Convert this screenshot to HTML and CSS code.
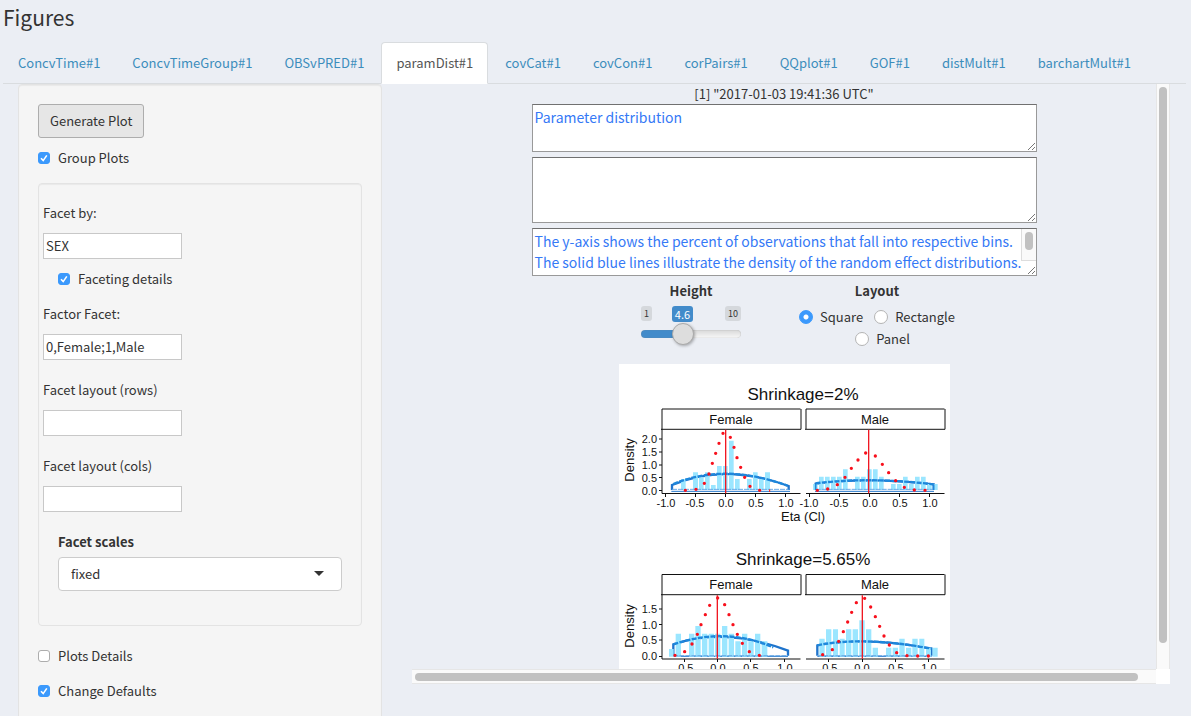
FILE: index.html
```html
<!DOCTYPE html>
<html lang="en">
<head>
<meta charset="utf-8">
<title>Figures</title>
<link rel="stylesheet" href="styles.css">
</head>
<body>
<h1 class="title">Figures</h1>
<nav class="tabs">
  <a class="tab" href="#">ConcvTime#1</a>
  <a class="tab" href="#">ConcvTimeGroup#1</a>
  <a class="tab" href="#">OBSvPRED#1</a>
  <a class="tab active" href="#">paramDist#1</a>
  <a class="tab" href="#">covCat#1</a>
  <a class="tab" href="#">covCon#1</a>
  <a class="tab" href="#">corPairs#1</a>
  <a class="tab" href="#">QQplot#1</a>
  <a class="tab" href="#">GOF#1</a>
  <a class="tab" href="#">distMult#1</a>
  <a class="tab" href="#">barchartMult#1</a>
</nav>
<main class="columns">
  <form class="sidebar">
    <button class="btn" type="button">Generate Plot</button>
    <label class="check first"><input type="checkbox" checked>Group Plots</label>
    <div class="group">
      <div class="field"><label for="facet">Facet by:</label><input id="facet" type="text" value="SEX"></div>
      <label class="check nested"><input type="checkbox" checked>Faceting details</label>
      <div class="field"><label for="factor">Factor Facet:</label><input id="factor" type="text" value="0,Female;1,Male"></div>
      <div class="field"><label for="rows">Facet layout (rows)</label><input id="rows" type="text"></div>
      <div class="field"><label for="cols">Facet layout (cols)</label><input id="cols" type="text"></div>
      <div class="scales">
        <label class="strong" for="scales">Facet scales</label>
        <div class="picker"><select id="scales"><option>fixed</option></select></div>
      </div>
    </div>
    <label class="check"><input type="checkbox">Plots Details</label>
    <label class="check"><input type="checkbox" checked>Change Defaults</label>
  </form>
  <section class="pane">
    <div class="content">
      <p class="stamp">[1] "2017-01-03 19:41:36 UTC"</p>
      <div class="note"><textarea class="short" aria-label="Title">Parameter distribution</textarea><i class="grip"></i></div>
      <div class="note"><textarea class="tall" aria-label="Subtitle"></textarea><i class="grip"></i></div>
      <div class="note"><textarea class="short" aria-label="Footnote">The y-axis shows the percent of observations that fall into respective bins.
The solid blue lines illustrate the density of the random effect distributions.</textarea><div class="notebar"><i></i></div><i class="grip"></i></div>
      <div class="controls">
        <div class="control">
          <label class="strong" for="height">Height</label>
          <div class="slider">
            <div class="marks"><span>1</span><output for="height">4.6</output><span>10</span></div>
            <input id="height" type="range" min="1" max="10" step="0.1" value="4.6">
          </div>
        </div>
        <fieldset class="control">
          <legend class="strong">Layout</legend>
          <div class="radios">
            <label class="radio"><input type="radio" name="layout" checked>Square</label>
            <label class="radio"><input type="radio" name="layout">Rectangle</label>
            <label class="radio"><input type="radio" name="layout">Panel</label>
          </div>
        </fieldset>
      </div>
      <svg class="plot" viewBox="619 364 331 331" role="img" aria-label="Parameter distribution plots">
        <rect x="619" y="364" width="331" height="331" fill="#fff"/>
        <g class="frame">
          <path d="M662 429V409H800.500M806 429V409H944.500M662 595V574.500H800.500M806 595V574.500H944.500" stroke="#555"/>
          <path d="M661 429.300H801V409M805 429.300H945V409M661 594.700H801V574.500M805 594.700H945V574.500M662 429V493.500H800.500M806 493.500H944.500M662 595V659H800.500M806 659H944.500"/>
          <path d="M659 439h3M659 452h3M659 465h3M659 477.500h3M659 490.500h3M665.500 494v3M695.500 494v3M725.500 494v3M755.500 494v3M785.500 494v3M809.500 494v3M839.500 494v3M869.500 494v3M899.500 494v3M929.500 494v3"/>
          <path d="M659 609h3M659 624.500h3M659 640h3M659 656.500h3M684.500 659v3M717.500 659v3M750.500 659v3M784.500 659v3M828.500 659v3M862.500 659v3M895.500 659v3M928.500 659v3"/>
        </g>
        <g transform="translate(610 360) scale(.333333)">
          <path class="density" d="M186 390V375Q345 308 536 378V390"/>
          <path class="floor" d="M184 394H540"/>
          <path class="bars" d="M213 357h14V390h-14zM249 337h15V390h-15zM267 352h14V390h-14zM285 337h14V390h-14zM303 375h14V390h-14zM321 318h14V390h-14zM339 318h14V390h-14zM357 242h14V390h-14zM375 357h14V390h-14zM411 357h14V390h-14zM429 337h14V390h-14zM447 357h14V390h-14zM465 337h15V390h-15z"/>
          <path class="dashes" d="M190 372Q345 308 532 377"/>
          <path class="base" d="M186 388H536"/>
          <path class="dots" d="M226 391h0M258 388h0M283 370h0M297 342h0M307 310h0M317 280h0M327 250h0M339 220h0M361 232h0M372 262h0M381 293h0M392 322h0M404 352h0M420 379h0M449 391h0"/>
          <path class="zero" d="M347 209V400"/>
          <path d="M479 388v8" stroke="#f11" stroke-width="3"/>
        </g>
        <g transform="translate(780 360) scale(.333333)">
          <path class="density" d="M107 390V371Q265 350 461 373V390"/>
          <path class="floor" d="M105 394H462"/>
          <path class="bars" d="M99 372h14V390h-14zM117 350h14V390h-14zM135 350h14V390h-14zM153 350h14V390h-14zM171 350h14V390h-14zM189 328h14V390h-14zM225 350h14V390h-14zM243 350h14V390h-14zM261 328h14V390h-14zM279 328h14V390h-14zM297 350h14V390h-14zM333 372h14V390h-14zM351 372h14V390h-14zM369 350h14V390h-14zM387 372h14V390h-14zM405 350h14V390h-14zM423 350h14V390h-14zM441 372h14V390h-14zM459 372h14V390h-14z"/>
          <path class="dashes" d="M107 370Q265 350 461 373"/>
          <path class="base" d="M107 388H461"/>
          <path d="M107 372V390M461 373V390" stroke="#1e88dc" stroke-width="5"/>
          <path class="dots" d="M112 391h0M143 387h0M172 374h0M195 352h0M214 325h0M234 300h0M257 279h0M286 288h0M307 313h0M326 338h0M347 362h0M373 382h0M403 390h0M435 391h0"/>
          <path class="zero" d="M266 209V400"/>
        </g>
        <g transform="translate(610 540) scale(.333333)">
          <path class="density" d="M190 347V313Q345 260 534 332V347"/>
          <path class="floor" d="M190 349H534"/>
          <path class="bars" d="M177 327h14V350h-14zM197 281h16V350h-16zM237 281h16V350h-16zM256 258h16V350h-16zM276 281h16V350h-16zM296 281h16V350h-16zM315 281h16V350h-16zM336 258h16V350h-16zM356 281h16V350h-16zM376 304h16V350h-16zM396 281h16V350h-16zM415 304h16V350h-16zM435 281h16V350h-16zM455 304h17V350h-17z"/>
          <path class="dashes" d="M190 313Q345 260 490 322"/>
          <path class="base" d="M190 347H534"/>
          <path class="dots" d="M195 346h0M224 335h0M246 312h0M262 283h0M273 254h0M286 224h0M299 196h0M323 174h0M344 194h0M357 224h0M369 254h0M382 283h0M397 310h0M418 335h0M448 346h0"/>
          <path class="zero" d="M322 166V356"/>
        </g>
        <g transform="translate(780 540) scale(.333333)">
          <path class="density" d="M112 347V316Q250 288 455 326V347"/>
          <path class="floor" d="M112 349H455"/>
          <path class="bars" d="M118 296h16V350h-16zM138 268h16V350h-16zM159 268h15V350h-15zM179 296h15V350h-15zM198 268h16V350h-16zM218 268h16V350h-16zM238 241h16V350h-16zM258 268h16V350h-16zM278 323h16V350h-16zM318 323h16V350h-16zM338 323h16V350h-16zM358 296h16V350h-16zM378 323h16V350h-16zM397 296h16V350h-16zM418 296h15V350h-15zM438 323h15V350h-15zM457 323h16V350h-16z"/>
          <path class="dashes" d="M112 316Q250 288 455 326"/>
          <path class="base" d="M112 347H455"/>
          <path class="dots" d="M128 344h0M157 329h0M176 304h0M190 275h0M203 246h0M215 217h0M229 188h0M254 175h0M272 201h0M286 230h0M299 259h0M312 288h0M328 315h0M350 338h0M381 347h0M413 348h0M445 348h0"/>
          <path class="zero" d="M247 166V356"/>
        </g>
        <g class="t-title"><text x="803" y="400">Shrinkage=2%</text><text x="803" y="565">Shrinkage=5.65%</text></g>
        <g class="t-label">
          <text x="731" y="424">Female</text><text x="875" y="424">Male</text>
          <text x="731" y="589">Female</text><text x="875" y="589">Male</text>
          <text x="803" y="521">Eta (Cl)</text>
          <text transform="translate(634 460) rotate(-90)">Density</text>
          <text transform="translate(634 626) rotate(-90)">Density</text>
        </g>
        <g class="t-tick">
          <text x="666" y="507">-1.0</text><text x="695" y="507">-0.5</text><text x="726" y="507">0.0</text><text x="756" y="507">0.5</text><text x="786" y="507">1.0</text>
          <text x="809" y="507">-1.0</text><text x="839" y="507">-0.5</text><text x="870" y="507">0.0</text><text x="900" y="507">0.5</text><text x="930" y="507">1.0</text>
          <text x="684" y="672">-0.5</text><text x="718" y="672">0.0</text><text x="751" y="672">0.5</text><text x="785" y="672">1.0</text>
          <text x="828" y="672">-0.5</text><text x="862" y="672">0.0</text><text x="896" y="672">0.5</text><text x="929" y="672">1.0</text>
        </g>
        <g class="t-tick end">
          <text x="657" y="443">2.0</text><text x="657" y="456">1.5</text><text x="657" y="469">1.0</text><text x="657" y="482">0.5</text><text x="657" y="495">0.0</text>
          <text x="657" y="613">1.5</text><text x="657" y="629">1.0</text><text x="657" y="644">0.5</text><text x="657" y="660">0.0</text>
        </g>
      </svg>
    </div>
    <div class="vbar"><i></i></div>
    <div class="hbar"><i></i></div>
    <div class="corner"></div>
  </section>
</main>
</body>
</html>
```
FILE: styles.css
```css
* { box-sizing: border-box; }
body {
  margin: 0;
  height: 100vh;
  overflow: hidden;
  background: #ebeef4;
  color: #333;
  font: 13px/20px "Noto Sans CJK SC", "Noto Sans", sans-serif;
}
input, select, textarea, button { font: inherit; color: inherit; margin: 0; }
.title { margin: 0; padding: 4px 3px 12px; font-size: 21px; line-height: 26px; font-weight: 400; }
.tabs { display: flex; gap: 2px; margin: 0 5px 0 3px; border-bottom: 1px solid #d9dcdf; }
.tab {
  padding: 10px 14px;
  margin-bottom: -1px;
  border: 1px solid transparent;
  border-radius: 4px 4px 0 0;
  color: #3c8dbc;
  text-decoration: none;
  white-space: nowrap;
}
.tab.active { background: #fff; color: #555; border-color: #d9dcdf; border-bottom-color: #fff; }
.columns { display: flex; align-items: flex-start; gap: 30px; padding: 0 21px 0 18px; }
.sidebar {
  flex: 0 0 364px;
  padding: 19px 19px 60px;
  background: #f5f5f5;
  border: 1px solid #e3e3e3;
  border-radius: 4px;
  box-shadow: inset 0 1px 1px rgba(0,0,0,.05);
}
.btn { display: block; height: 34px; padding: 0 11px; background: #e6e6e6; border: 1px solid #adadad; border-radius: 3px; }
.check { display: flex; align-items: center; gap: 8px; margin-bottom: 15px; }
.check.first { margin: 10px 0 15px; }
.check.nested { margin: 10px 0 15px 15px; }
.check input {
  appearance: none;
  width: 12px;
  height: 12px;
  border: 1px solid #adadad;
  border-radius: 3px;
  background: #fff;
}
.check input:checked {
  border-color: #3b99fc;
  background: #3b99fc url("data:image/svg+xml,%3Csvg xmlns='http://www.w3.org/2000/svg' viewBox='0 0 10 10'%3E%3Cpath d='M2 5.300L4.200 7.600 7.800 2.400' fill='none' stroke='white' stroke-width='1.600'/%3E%3C/svg%3E") center / 10px 10px;
}
.group {
  margin-bottom: 20px;
  padding: 19px 4px 34px;
  border: 1px solid #e3e3e3;
  border-radius: 4px;
  box-shadow: inset 0 1px 1px rgba(0,0,0,.05);
}
.field { display: flex; flex-direction: column; align-items: flex-start; gap: 10px; margin-bottom: 20px; }
.field:has(+ .nested) { margin-bottom: 0; }
.field input { width: 139px; height: 26px; padding: 0 2px 2px; border: 1px solid #c8c8c8; background: #fff; }
.scales { margin: 0 15px; display: grid; gap: 5px; }
.strong { font-weight: 700; }
.picker { position: relative; }
.picker select { appearance: none; display: block; width: 100%; height: 34px; padding: 0 12px; border: 1px solid #ccc; border-radius: 4px; background: #fff; }
.picker::after { content: ""; position: absolute; right: 18px; top: 14px; border: 5px solid transparent; border-top-color: #333; border-bottom: 0; }
.pane { flex: 1; min-width: 0; height: 600px; display: grid; grid-template: minmax(0, 1fr) 15px / minmax(0, 1fr) 14px; }
.content { overflow: hidden; display: flex; flex-direction: column; align-items: center; }
.stamp { margin: 0; }
.note { position: relative; width: 505px; max-width: 100%; margin-bottom: 5px; flex: none; }
.note textarea {
  display: block;
  width: 100%;
  padding: 2px;
  border: 1px solid #999;
  border-top-color: #707070;
  resize: none;
  overflow: hidden;
  background: #fff;
  color: #3579f6;
  font-size: 14px;
  line-height: 21px;
  white-space: pre;
}
.short { height: 48px; }
.tall { height: 66px; }
.grip {
  position: absolute;
  right: 2px;
  bottom: 2px;
  width: 7px;
  height: 7px;
  background: linear-gradient(135deg, transparent 46%, #777 46% 54%, transparent 54% 72%, #777 72% 80%, transparent 80%);
}
.notebar { position: absolute; right: 1px; top: 1px; width: 15px; height: 32px; padding: 3px; background: #fafafa; border-left: 1px solid #ddd; border-bottom: 1px solid #ddd; }
.notebar i { display: block; width: 8px; height: 18px; border-radius: 4px; background: #c1c1c1; }
.controls { width: 50%; display: grid; grid-template-columns: 1fr 1fr; flex: none; }
.control { border: 0; margin: 0; padding: 0; min-width: 0; display: flex; flex-direction: column; align-items: center; text-align: center; }
.control legend { padding: 0; margin: 0 auto; }
.slider { width: 100px; margin-top: 5px; }
.marks { display: flex; justify-content: space-between; align-items: flex-start; font-size: 9px; line-height: 15px; }
.marks span { padding: 0 3px; border-radius: 3px; background: #d5d8dc; }
.marks output { margin-right: 12px; padding: 0 3px; border-radius: 3px; background: #428bca; color: #fff; font-size: 11px; line-height: 16px; }
.slider input { appearance: none; display: block; width: 100%; height: 24px; background: none; }
.slider input::-webkit-slider-runnable-track {
  height: 8px;
  border-radius: 4px;
  background: linear-gradient(90deg, #428bca 42%, transparent 42%), linear-gradient(#d8d8d8, #f8f8f8);
  box-shadow: inset 0 0 1px #888;
}
.slider input::-webkit-slider-thumb {
  appearance: none;
  width: 22px;
  height: 22px;
  margin-top: -7px;
  border: 1px solid #aaa;
  border-radius: 50%;
  background: #ddd;
  box-shadow: 1px 1px 3px rgba(0,0,0,.3);
}
.radios { display: flex; flex-wrap: wrap; justify-content: center; row-gap: 2px; padding-top: 6px; }
.radio { display: flex; align-items: center; gap: 7px; }
.radio + .radio { margin-left: 11px; }
.radio input { appearance: none; width: 14px; height: 14px; border: 1px solid #b4b4b4; border-radius: 50%; background: #fff; }
.radio input:checked { border-color: #3b99fc; background: radial-gradient(circle, #fff 2px, #3b99fc 3px); }
.plot { display: block; width: 331px; height: 331px; flex: none; margin-top: 15px; }
.vbar { padding: 3px 2px; background: #fafafa; border: solid #e6e6e6; border-width: 0 1px; }
.vbar i { display: block; width: 8px; height: 96%; margin: 0 auto; border-radius: 4px; background: #c1c1c1; }
.hbar { padding: 3px; background: #fafafa; border: solid #e6e6e6; border-width: 1px 0; }
.hbar i { display: block; width: 98%; height: 8px; border-radius: 4px; background: #c1c1c1; }
.corner { background: #fff; }
.frame path { fill: none; stroke: #111; stroke-width: 1; }
.plot text { font-family: "Liberation Sans", Arial, sans-serif; fill: #111; text-anchor: middle; }
.plot .t-title text { font-size: 17px; }
.plot .t-label text { font-size: 13px; }
.plot .t-tick text { font-size: 11px; }
.plot .end text { text-anchor: end; }
.density { fill: none; stroke: #1f74cc; stroke-width: 7; }
.floor { stroke: #1f74cc; stroke-width: 3; }
.bars { fill: #9be6ff; }
.dashes { fill: none; stroke: #1e88dc; stroke-width: 7; stroke-dasharray: 15 4; }
.base { fill: none; stroke: #6aaae6; stroke-width: 3; stroke-dasharray: 15 3; }
.dots { fill: none; stroke: #f8101c; stroke-width: 10; stroke-linecap: round; }
.zero { stroke: #f01822; stroke-width: 4; }
```
